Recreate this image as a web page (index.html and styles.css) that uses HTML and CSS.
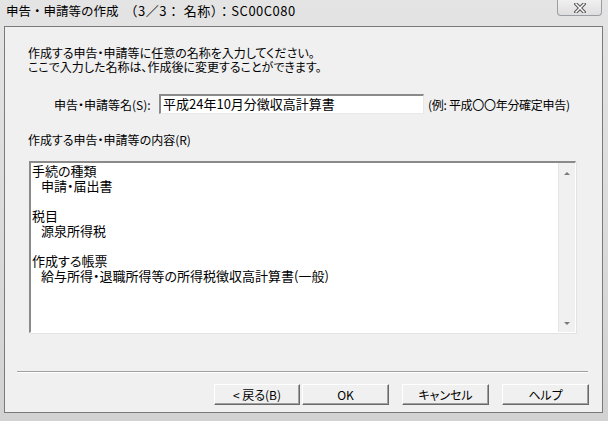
FILE: index.html
```html
<!DOCTYPE html>
<html lang="ja">
<head>
<meta charset="utf-8">
<title>申告・申請等の作成</title>
<link rel="stylesheet" href="styles.css">
</head>
<body>
<div class="window">
  <div class="titlebar">
    <span class="title">申告・申請等の作成　<span class="title-sub">（3／3： 名称）：SC00C080</span></span>
    <div class="close">
      <svg width="12" height="10" viewBox="0 0 12 10">
        <path d="M2 1 L10 9 M10 1 L2 9" stroke="#5a5a5a" stroke-width="3.6" stroke-linecap="square" fill="none"/>
        <path d="M2 1 L10 9 M10 1 L2 9" stroke="#ffffff" stroke-width="1.4" stroke-linecap="square" fill="none"/>
      </svg>
    </div>
  </div>
  <div class="client">
    <p class="intro">作成する申告・申請等に任意の名称を入力してください。<br>ここで入力した名称は、作成後に変更することができます。</p>
    <div class="name-row">
      <span class="label">申告・申請等名(S):</span>
      <div class="input">平成24年10月分徴収高計算書</div>
      <span class="hint">(例: 平成〇〇年分確定申告)</span>
    </div>
    <div class="section-label">作成する申告・申請等の内容(R)</div>
    <div class="textarea">
      <div class="content">
        <div class="line">手続の種類</div>
        <div class="line indent">申請・届出書</div>
        <div class="line"></div>
        <div class="line">税目</div>
        <div class="line indent">源泉所得税</div>
        <div class="line"></div>
        <div class="line">作成する帳票</div>
        <div class="line indent">給与所得・退職所得等の所得税徴収高計算書(一般)</div>
      </div>
      <div class="scrollbar">
        <span class="arrow up"></span>
        <span class="arrow down"></span>
      </div>
    </div>
    <div class="separator"></div>
    <div class="buttons">
      <div class="btn back">&lt; 戻る(B)</div>
      <div class="btn ok">OK</div>
      <div class="btn">キャンセル</div>
      <div class="btn">ヘルプ</div>
    </div>
  </div>
</div>
</body>
</html>
```
FILE: styles.css
```css
* { box-sizing: border-box; }
html, body { margin: 0; padding: 0; }
body {
  width: 608px;
  height: 421px;
  overflow: hidden;
  background: #dcdcdc;
  font-family: "Noto Sans CJK JP", "Liberation Sans", sans-serif;
  font-feature-settings: "palt";
  color: #000;
}
.window {
  width: 608px;
  height: 421px;
  display: flex;
  flex-direction: column;
  background: linear-gradient(to bottom, #e4e4e4, #dadada 60%, #d2d2d2);
}
.titlebar {
  height: 26px;
  display: flex;
  align-items: flex-start;
  padding-left: 6px;
}
.title {
  font-size: 12.5px;
  line-height: 22px;
  color: #000;
  font-feature-settings: normal;
}
.title-sub {
  font-size: 13px;
  letter-spacing: 0.5px;
}
.close {
  margin-left: auto;
  margin-right: 6px;
  width: 45px;
  height: 16px;
  border: 1px solid #9a9ea4;
  border-top: none;
  border-radius: 0 0 4px 4px;
  background: linear-gradient(to bottom, #f0f0f0, #dedede);
  display: flex;
  align-items: center;
  justify-content: center;
}
.client {
  margin: 0 5px 8px 4px;
  height: 387px;
  background: #f0f0f0;
  border: 1px solid #7a7a7a;
  display: flex;
  flex-direction: column;
  font-size: 12px;
}
.intro {
  margin: 19px 0 0 23px;
  line-height: 14px;
  font-size: 12px;
}
.name-row {
  margin-top: 20px;
  padding-left: 49px;
  display: flex;
  align-items: center;
  height: 20px;
}
.label { width: 105px; }
.input {
  width: 265px;
  height: 20px;
  background: #fff;
  border-top: 2px solid #8a8a8a;
  border-left: 2px solid #8a8a8a;
  border-right: 1px solid #e8e8e8;
  border-bottom: 1px solid #e8e8e8;
  font-size: 13px;
  line-height: 16px;
  padding-left: 2px;
  white-space: nowrap;
}
.hint { margin-left: 4px; letter-spacing: -0.3px; }
.section-label {
  margin: 19px 0 0 23px;
  line-height: 14px;
}
.textarea {
  margin: 14px 0 0 24px;
  width: 547px;
  height: 172px;
  background: #fff;
  border-top: 2px solid #8a8a8a;
  border-left: 2px solid #8a8a8a;
  border-right: 1px solid #ffffff;
  border-bottom: 1px solid #ffffff;
  box-shadow: 1px 1px 0 #e3e3e3;
  display: flex;
}
.content {
  flex: 1;
  padding: 0 0 0 1px;
  font-size: 13px;
  line-height: 15px;
}
.line { height: 15px; white-space: nowrap; }
.indent { padding-left: 9px; }
.scrollbar {
  width: 17px;
  background: #f0f0f0;
  border-left: 1px solid #e6e6e6;
  display: flex;
  flex-direction: column;
  justify-content: space-between;
  align-items: center;
  padding: 9px 0 7px;
}
.arrow {
  width: 0;
  height: 0;
  border-left: 3px solid transparent;
  border-right: 3px solid transparent;
}
.arrow.up { border-bottom: 3px solid #7a7a7a; }
.arrow.down { border-top: 3px solid #7a7a7a; }
.separator {
  margin: 38px 0 0 12px;
  width: 571px;
  height: 2px;
  border-top: 1px solid #a0a0a0;
  border-bottom: 1px solid #ffffff;
}
.buttons {
  margin-top: 11px;
  padding-right: 13px;
  display: flex;
  justify-content: flex-end;
  gap: 13px;
}
.btn {
  width: 87px;
  height: 21px;
  background: #f0f0f0;
  border-top: 1px solid #ffffff;
  border-left: 1px solid #ffffff;
  border-right: 1px solid #696969;
  border-bottom: 1px solid #696969;
  box-shadow: inset -1px -1px 0 #a0a0a0;
  display: flex;
  align-items: center;
  justify-content: center;
  font-size: 12px;
  line-height: 14px;
}
.btn.back { margin-right: -11px; width: 86px; }
```
